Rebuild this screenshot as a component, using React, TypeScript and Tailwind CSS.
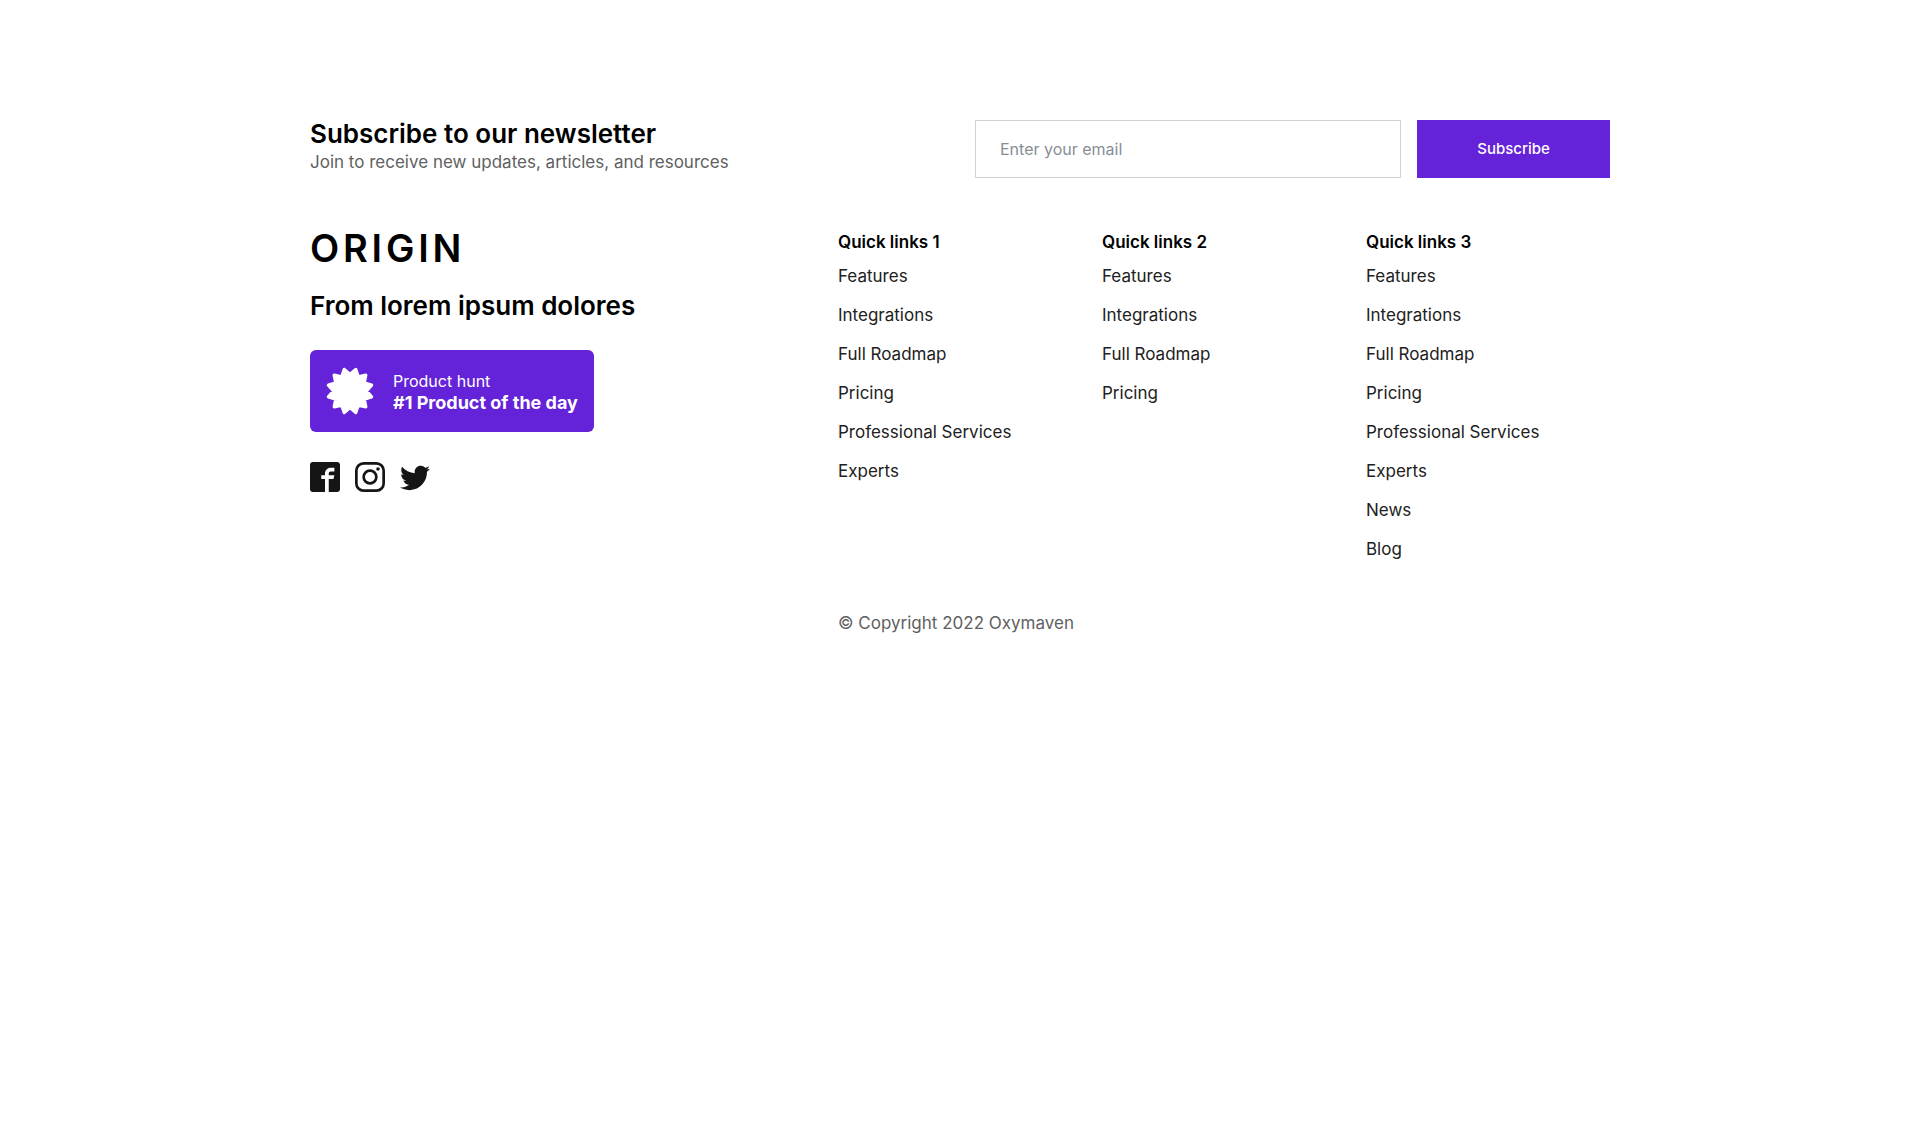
import { ImFacebook2, ImTwitter } from "react-icons/im";

const linkColumns = [
  {
    title: "Quick links 1",
    links: ["Features", "Integrations", "Full Roadmap", "Pricing", "Professional Services", "Experts"],
  },
  {
    title: "Quick links 2",
    links: ["Features", "Integrations", "Full Roadmap", "Pricing"],
  },
  {
    title: "Quick links 3",
    links: [
      "Features",
      "Integrations",
      "Full Roadmap",
      "Pricing",
      "Professional Services",
      "Experts",
      "News",
      "Blog",
    ],
  },
];

function InstagramIcon({ className }: { className?: string }) {
  return (
    <svg viewBox="0 0 30 30" fill="none" stroke="currentColor" strokeWidth="2.7" className={className}>
      <rect x="1.35" y="1.35" width="27.3" height="27.3" rx="7.2" />
      <circle cx="15" cy="15" r="6.35" />
      <circle cx="23" cy="7" r="1.8" fill="currentColor" stroke="none" />
    </svg>
  );
}

const socials = [
  { name: "Facebook", Icon: ImFacebook2 },
  { name: "Instagram", Icon: InstagramIcon },
  { name: "Twitter", Icon: ImTwitter },
];

// 12 pointed burst, tips and notches alternate every 15 degrees
const burstPoints = Array.from({ length: 24 }, (_, i) => {
  const angle = (i * Math.PI) / 12;
  const radius = i % 2 === 0 ? 16.4 : 22.3;
  return `${(24 + radius * Math.sin(angle)).toFixed(2)},${(24 - radius * Math.cos(angle)).toFixed(2)}`;
}).join(" ");

function BurstIcon() {
  return (
    <svg viewBox="0 0 48 48" className="size-12 shrink-0" aria-hidden="true">
      <polygon
        points={burstPoints}
        fill="white"
        stroke="white"
        strokeWidth="3.4"
        strokeLinejoin="round"
      />
    </svg>
  );
}

function Newsletter() {
  return (
    <section className="flex items-start justify-between gap-5">
      <div>
        <h2 className="text-[26px] leading-7 font-semibold">Subscribe to our newsletter</h2>
        <p className="text-[17px] leading-7 text-[#5f5f5f]">
          Join to receive new updates, articles, and resources
        </p>
      </div>
      <form className="flex w-[635px] gap-4" onSubmit={(e) => e.preventDefault()}>
        <input
          type="email"
          aria-label="Email"
          placeholder="Enter your email"
          className="h-[58px] min-w-0 flex-1 border border-[#ced4d6] px-6 text-base placeholder:text-[#868e96]"
        />
        <button type="submit" className="h-[58px] w-[193px] bg-[#6422d9] text-[15px] font-medium text-white">
          Subscribe
        </button>
      </form>
    </section>
  );
}

function Brand() {
  return (
    <div className="col-span-2 flex flex-col items-start">
      <div className="text-[38px] leading-9 font-semibold tracking-widest">ORIGIN</div>
      <h3 className="mt-[26px] text-[26px] leading-7 font-semibold">From lorem ipsum dolores</h3>
      <a
        href="#"
        className="mt-[30px] flex h-[82px] w-[284px] items-center gap-[19px] rounded-md bg-[#6422d9] pl-4 text-white"
      >
        <BurstIcon />
        <span className="pt-0.5 whitespace-nowrap">
          <span className="block text-base leading-[22px]">Product hunt</span>
          <span className="block text-lg leading-[22px] font-bold">#1 Product of the day</span>
        </span>
      </a>
      <div className="mt-[30px] flex gap-[15px] text-[#151515]">
        {socials.map(({ name, Icon }) => (
          <a key={name} href="#" aria-label={name}>
            <Icon className="size-[30px]" />
          </a>
        ))}
      </div>
    </div>
  );
}

export default function App() {
  return (
    <footer className="mx-auto max-w-[1300px] pt-[120px] font-['Inter',sans-serif] text-black">
      <Newsletter />
      <div className="mt-[52px] grid grid-cols-5 gap-x-5">
        <Brand />
        {linkColumns.map((column) => (
          <nav key={column.title} aria-label={column.title}>
            <h4 className="text-[17px] leading-6 font-semibold">{column.title}</h4>
            <ul className="mt-[3px]">
              {column.links.map((link) => (
                <li key={link} className="text-[17px] leading-[39px] text-[#212121]">
                  <a href="#">{link}</a>
                </li>
              ))}
            </ul>
          </nav>
        ))}
        <p className="col-span-3 col-start-3 mt-10 text-[17px] leading-7 text-[#5f5f5f]">
          © Copyright 2022 Oxymaven
        </p>
      </div>
    </footer>
  );
}
